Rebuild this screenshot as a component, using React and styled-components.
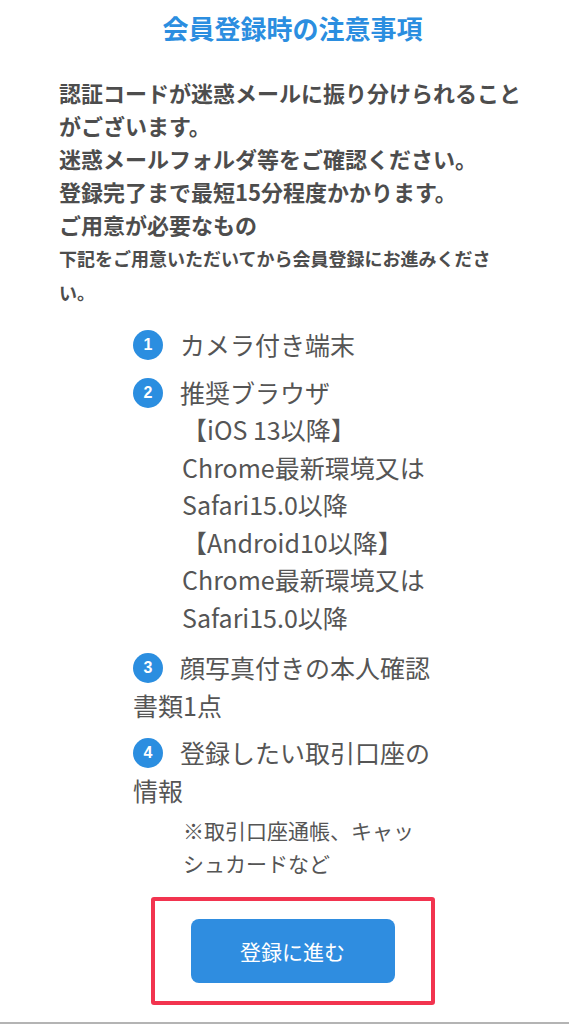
import React from 'react'
import styled, { createGlobalStyle } from 'styled-components'

const GlobalStyle = createGlobalStyle`
  body {
    margin: 0;
    background: #ffffff;
    font-family: "Noto Sans CJK JP", "Noto Sans", sans-serif;
  }
`

const Page = styled.div`
  width: 569px;
  height: 1024px;
  box-sizing: border-box;
  padding: 10px 0 0 16px;
  display: flex;
  flex-direction: column;
  overflow: hidden;
`
const Title = styled.h1`
  margin: 0;
  font-size: 26px;
  line-height: 36px;
  font-weight: 700;
  color: #2b8ee0;
  text-align: center;
`
const Notice = styled.div`
  margin: 30px 0 0 43px;
  width: 464px;
  color: #4d4d4d;
  font-weight: 700;
`
const NoticeText = styled.p`
  margin: 0;
  font-size: ${({ $small }) => ($small ? '18px' : '22px')};
  line-height: ${({ $small }) => ($small ? '34px' : '33px')};
`
const List = styled.ol`
  list-style: none;
  margin: 17px 0 0 117px;
  padding: 0;
  width: 300px;
  color: #555555;
`
const Item = styled.li`
  margin-top: ${({ $gap }) => $gap || 0}px;
  font-size: 25px;
  line-height: 37.5px;
`
const Num = styled.span`
  display: inline-flex;
  align-items: center;
  justify-content: center;
  width: 30px;
  height: 30px;
  margin-right: 17px;
  border-radius: 50%;
  background: #2b8ee0;
  color: #ffffff;
  font-family: "Liberation Sans", Arial, sans-serif;
  font-size: 16px;
  font-weight: 700;
  line-height: 1;
  vertical-align: middle;
  position: relative;
  top: -3px;
`
const Sub = styled.div`
  padding-left: 49px;
`
const Note = styled.div`
  margin-top: 5px;
  padding-left: 50px;
  font-size: 21px;
  line-height: 33px;
`
const Frame = styled.div`
  margin: 17px auto 0;
  width: 284px;
  box-sizing: border-box;
  border: 4px solid #f2344f;
  border-radius: 3px;
  padding: 18px 0;
  display: flex;
  justify-content: center;
`
const Button = styled.button`
  width: 204px;
  height: 64px;
  border: none;
  border-radius: 8px;
  background: #2f8de0;
  color: #ffffff;
  font-family: "Noto Sans CJK JP", sans-serif;
  font-size: 21px;
  cursor: pointer;
`
const Divider = styled.div`
  margin: auto 0 0 -16px;
  height: 2px;
  background: #b4b4b4;
`

const App = () => {
  return (
    <Page>
      <GlobalStyle />
      <Title>会員登録時の注意事項</Title>
      <Notice>
        <NoticeText>認証コードが迷惑メールに振り分けられることがございます。</NoticeText>
        <NoticeText>迷惑メールフォルダ等をご確認ください。</NoticeText>
        <NoticeText>登録完了まで最短15分程度かかります。</NoticeText>
        <NoticeText>ご用意が必要なもの</NoticeText>
        <NoticeText $small>下記をご用意いただいてから会員登録にお進みください。</NoticeText>
      </Notice>
      <List>
        <Item>
          <Num>1</Num>カメラ付き端末
        </Item>
        <Item $gap={10}>
          <Num>2</Num>推奨ブラウザ
          <Sub>
            <div>【iOS 13以降】</div>
            <div>Chrome最新環境又は</div>
            <div>Safari15.0以降</div>
            <div>【Android10以降】</div>
            <div>Chrome最新環境又は</div>
            <div>Safari15.0以降</div>
          </Sub>
        </Item>
        <Item $gap={13}>
          <Num>3</Num>顔写真付きの本人確認書類1点
        </Item>
        <Item $gap={10}>
          <Num>4</Num>登録したい取引口座の情報
          <Note>※取引口座通帳、キャッシュカードなど</Note>
        </Item>
      </List>
      <Frame>
        <Button>登録に進む</Button>
      </Frame>
      <Divider />
    </Page>
  )
}

export default App
